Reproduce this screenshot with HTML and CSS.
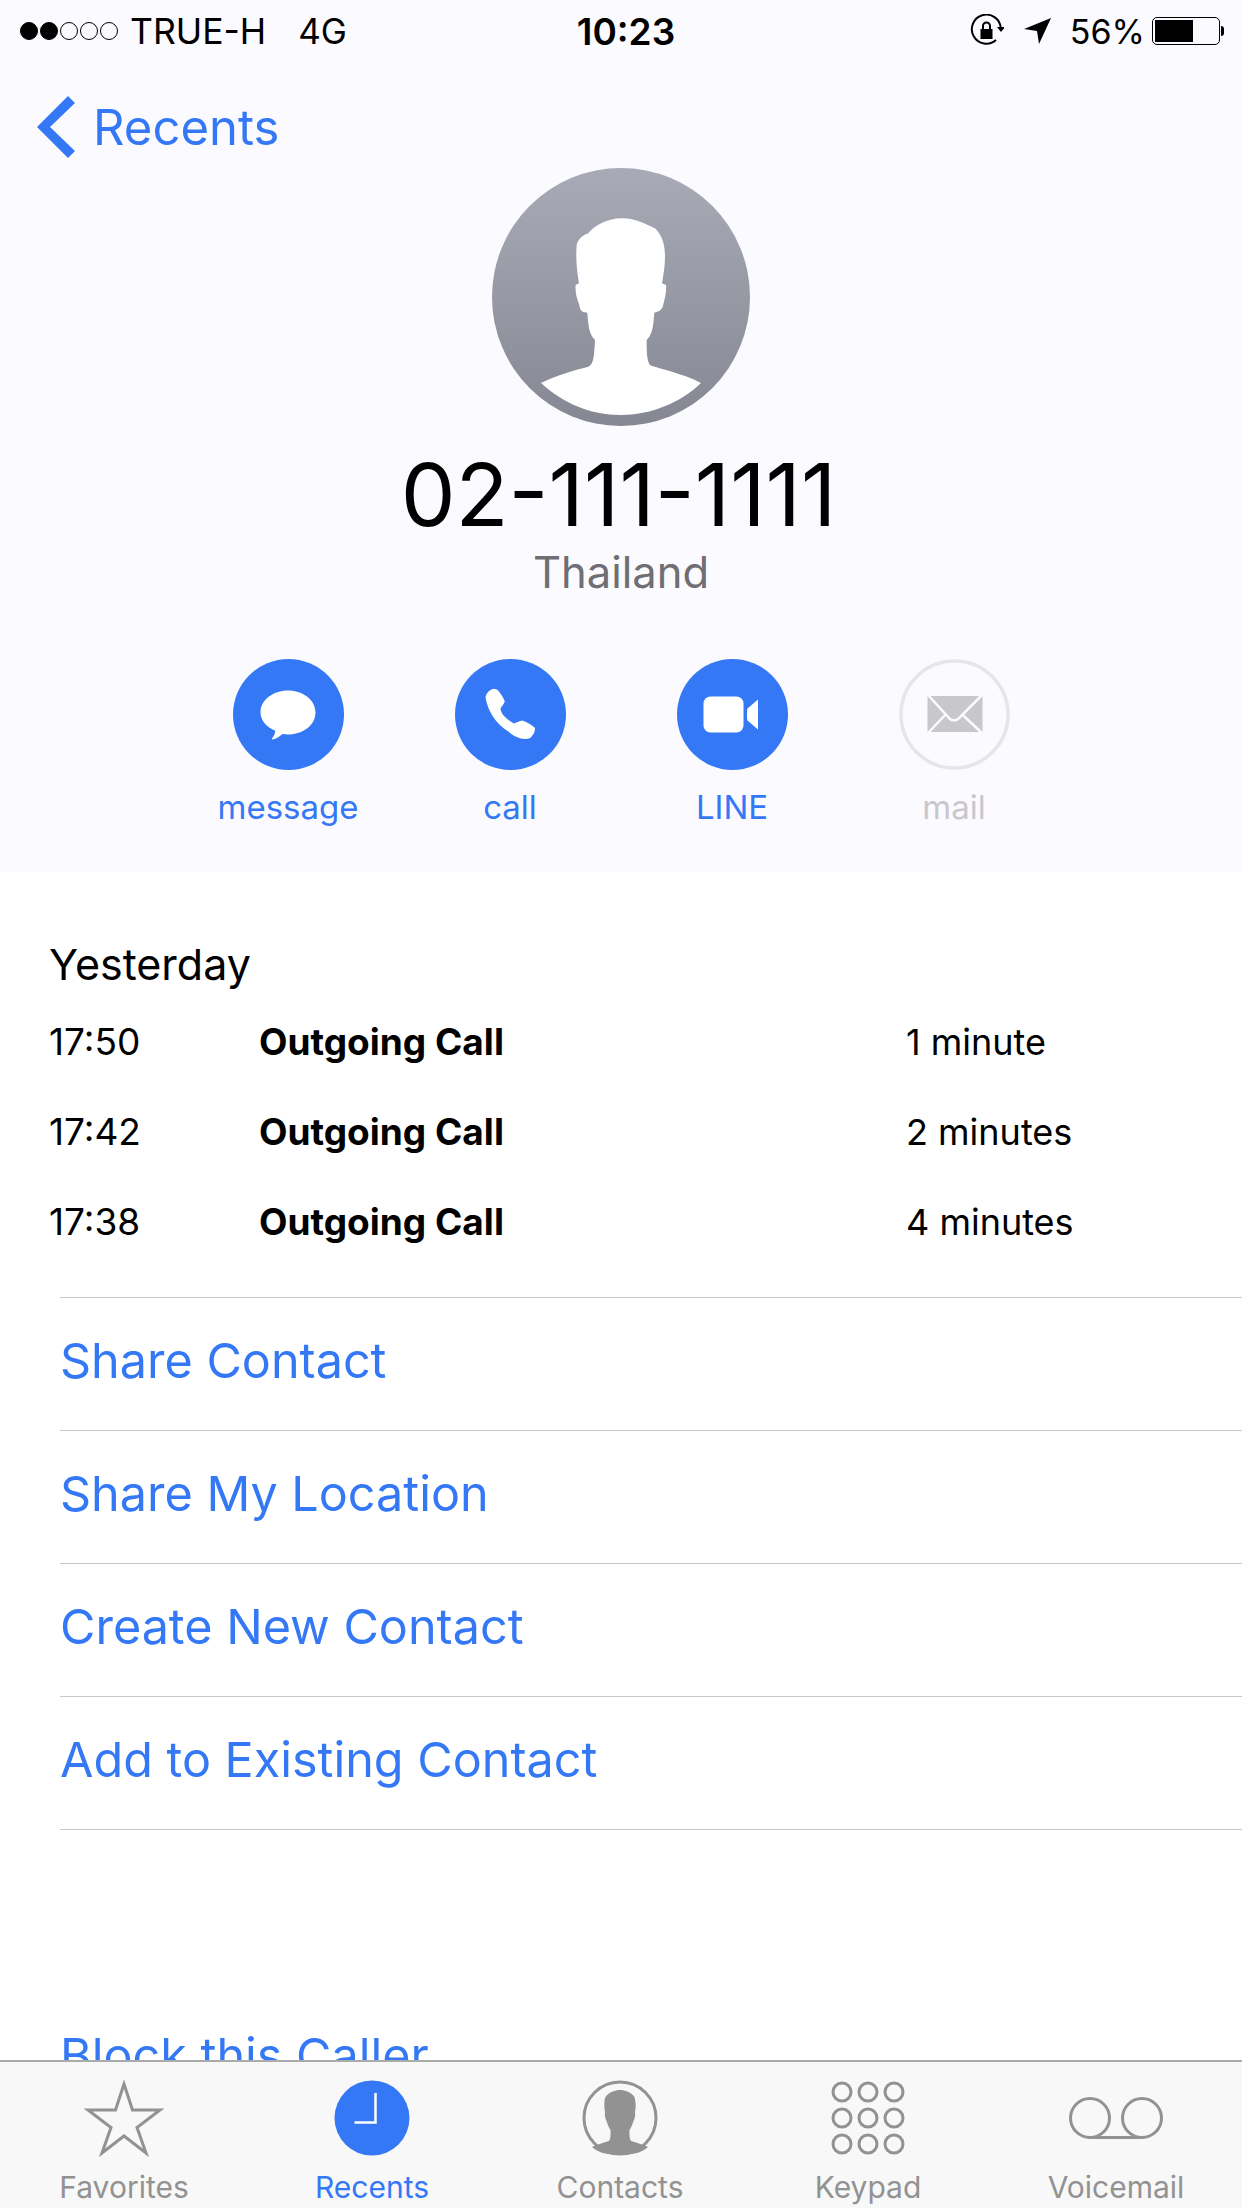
FILE: index.html
```html
<!DOCTYPE html>
<html lang="en">
<head>
<meta charset="utf-8">
<title>Recents</title>
<link rel="stylesheet" href="styles.css">
</head>
<body>
<div class="phone">
  <div class="scroller">
    <header class="head">
      <div class="status">
        <div class="status-left">
          <div class="signal"><i class="dot on"></i><i class="dot on"></i><i class="dot"></i><i class="dot"></i><i class="dot"></i></div>
          <span class="carrier">TRUE-H</span>
          <span class="net">4G</span>
        </div>
        <div class="clock">10:23</div>
        <div class="status-right">
          <svg class="ic-lock" viewBox="0 0 34 34"><path d="M26 26A14.500 14.500 0 1 1 30.800 14" fill="none" stroke="#000" stroke-width="2"/><path d="M27 13h8l-4 5z" fill="#000"/><rect x="10.500" y="15" width="12" height="10" fill="#000"/><path d="M13 15v-3a3.500 3.500 0 0 1 7 0v3" fill="none" stroke="#000" stroke-width="2"/></svg>
          <svg class="ic-loc" viewBox="0 0 28 28"><path d="M27 1 15 27l-2-13L0 12z" fill="#000"/></svg>
          <span class="pct">56%</span>
          <div class="batt"><div class="batt-fill"></div></div>
          <div class="batt-nub"></div>
        </div>
      </div>
      <div class="nav">
        <svg class="chev" viewBox="0 0 38 62"><path d="M31 0 38 7 13 31 38 55 31 62 0 31z" fill="#3478f6"/></svg>
        <span class="back">Recents</span>
      </div>
      <div class="profile">
        <svg class="avatar" viewBox="96 54 774 774">
          <defs><linearGradient id="ag" x1="0" y1="0" x2="0" y2="1"><stop offset="0" stop-color="#a8abb6"/><stop offset="1" stop-color="#858892"/></linearGradient></defs>
          <circle cx="483" cy="441" r="387" fill="url(#ag)"/>
          <path fill="#fff" d="M243 699C290 675 340 662 385 650C400 643 402 625 405 570C385 550 385 520 382 488C370 488 360 485 358 465C350 445 345 425 347 405L357 400C350 360 347 320 350 285C355 265 370 255 385 250C400 230 440 205 485 205C530 205 560 225 585 235C605 255 615 280 615 320C615 350 610 375 606 400L618 405C620 425 615 445 608 470C605 480 595 485 583 488C580 520 580 550 560 570C560 600 560 630 570 645C590 655 670 670 723 699C660 760 570 795 483 795C390 795 310 760 243 699Z"/>
        </svg>
        <h1 class="number">02-111-1111</h1>
        <div class="country">Thailand</div>
      </div>
      <div class="actions">
        <div class="action">
          <svg class="round" viewBox="0 0 111 111"><circle cx="55.500" cy="55.500" r="55.500" fill="#3478f6"/><path fill="#fff" d="M55 31.500C70 31.500 82.500 41 82.500 53.500C82.500 66 70 75.500 55 75.500C53 75.500 51.500 75.300 49.500 75C46.500 77.500 43.500 80 39.500 80.500C39 80.500 38.800 80 39.100 79.600C41 77 42 74.500 42.300 71.800C33.500 68 27.500 61.300 27.500 53.500C27.500 41 40 31.500 55 31.500Z"/></svg>
          <span class="label">message</span>
        </div>
        <div class="action">
          <svg class="round" viewBox="0 0 111 111"><circle cx="55.500" cy="55.500" r="55.500" fill="#3478f6"/><path fill="#fff" d="M38.800 29.800C34 31 30.500 35 30.600 39C32 46 34 51 37 56C41 63 47 68.500 54 73C58 77 65 80 70 80C74 80 76 79 77 77C79 75 80 72 80 69C77 66 72 63 67.400 61.500C64.500 62 62 63 59.200 64.500C56 63 52 60 49.300 57.200C47 55 46 52 45.400 49.800C47 47 49 45 49.800 42.200C48 38 46 35 43.800 32.200C42 30.500 40.500 29.800 38.800 29.800Z"/></svg>
          <span class="label">call</span>
        </div>
        <div class="action">
          <svg class="round" viewBox="0 0 111 111"><circle cx="55.500" cy="55.500" r="55.500" fill="#3478f6"/><rect x="26.500" y="37.500" width="40" height="36" rx="7" fill="#fff"/><path fill="#fff" d="M70.500 49.500 81 40.500 81 70.500 70.500 61.500C69.800 60.500 69.800 50.500 70.500 49.500Z"/></svg>
          <span class="label">LINE</span>
        </div>
        <div class="action">
          <svg class="round" viewBox="0 0 111 111"><circle cx="55.500" cy="55.500" r="53.500" fill="none" stroke="#e5e5ea" stroke-width="3.500"/><rect x="28.500" y="37" width="55" height="36" fill="#c7c7cc"/><path d="M29 36 50 59C52 62 58 62 60 59L83 36M29 74 46.600 55.500M83 74 63.200 55.500" fill="none" stroke="#fbfaff" stroke-width="2.500"/></svg>
          <span class="label muted">mail</span>
        </div>
      </div>
    </header>
    <main class="body">
      <section class="history">
        <h2 class="day">Yesterday</h2>
        <div class="call-row"><span class="t">17:50</span><span class="k">Outgoing Call</span><span class="d">1 minute</span></div>
        <div class="call-row"><span class="t">17:42</span><span class="k">Outgoing Call</span><span class="d">2 minutes</span></div>
        <div class="call-row"><span class="t">17:38</span><span class="k">Outgoing Call</span><span class="d">4 minutes</span></div>
      </section>
      <ul class="links">
        <li class="link">Share Contact</li>
        <li class="link">Share My Location</li>
        <li class="link">Create New Contact</li>
        <li class="link">Add to Existing Contact</li>
      </ul>
      <div class="block">Block this Caller</div>
    </main>
  </div>
  <nav class="tabs">
    <div class="tab">
      <svg class="tab-ic" viewBox="0 0 94 78"><path d="M47 5 55.500 31H83L60 48.500 69 74 47 57 25 74 34 48.500 11 31H38.500Z" fill="none" stroke="#929292" stroke-width="3"/></svg>
      <span class="tab-label">Favorites</span>
    </div>
    <div class="tab on">
      <svg class="tab-ic" viewBox="0 0 94 78"><circle cx="47" cy="39" r="37.500" fill="#3478f6"/><path d="M50.500 14V43.500H29.500" fill="none" stroke="#fff" stroke-width="2.500"/></svg>
      <span class="tab-label">Recents</span>
    </div>
    <div class="tab">
      <svg class="tab-ic" viewBox="0 0 94 78"><circle cx="47" cy="39" r="36" fill="none" stroke="#929292" stroke-width="3"/><path fill="#929292" d="M19 68C25 65 30 64 36 62C38 59 37.500 55 37.500 51C35.500 48 34.500 45 33.500 42C32 39 31.500 36 32 33C31 27 31 21 32.500 18C36 13 42 11 47 11C52 11 58 13 61.500 18C63 24 63 28 62 33C62.500 36 62 39 60.500 42C59.500 45 58.500 48 56.500 51C56.500 55 56 59 58 62C64 64 69 65 75 68C69 74 58 76 47 76C36 76 25 74 19 68Z"/></svg>
      <span class="tab-label">Contacts</span>
    </div>
    <div class="tab">
      <svg class="tab-ic" viewBox="0 0 94 78"><g fill="none" stroke="#929292" stroke-width="3"><circle cx="21" cy="13" r="9"/><circle cx="47" cy="13" r="9"/><circle cx="73" cy="13" r="9"/><circle cx="21" cy="39" r="9"/><circle cx="47" cy="39" r="9"/><circle cx="73" cy="39" r="9"/><circle cx="21" cy="65" r="9"/><circle cx="47" cy="65" r="9"/><circle cx="73" cy="65" r="9"/></g></svg>
      <span class="tab-label">Keypad</span>
    </div>
    <div class="tab">
      <svg class="tab-ic" viewBox="0 0 94 78"><g fill="none" stroke="#929292" stroke-width="3"><circle cx="21" cy="39" r="19.500"/><circle cx="73" cy="39" r="19.500"/><path d="M21 58.500H73"/></g></svg>
      <span class="tab-label">Voicemail</span>
    </div>
  </nav>
</div>
</body>
</html>
```
FILE: styles.css
```css
* { box-sizing: border-box; }
html, body { margin: 0; padding: 0; background: #fff; }
body { font-family: Inter, "Liberation Sans", sans-serif; color: #000; }
.phone { width: 1242px; height: 2208px; display: flex; flex-direction: column; overflow: hidden; }
.scroller { flex: 1 1 0; min-height: 0; overflow: hidden; }

.head { height: 872px; background: #fbfaff; }
.status { height: 62px; padding: 0 18px 0 20px; display: grid; grid-template-columns: 1fr auto 1fr; align-items: center; }
.status-left { display: flex; align-items: center; }
.signal { display: flex; gap: 2px; width: 110px; }
.dot { width: 18px; height: 18px; border-radius: 50%; border: 1.500px solid #000; display: block; }
.dot.on { background: #000; }
.carrier { font-size: 35.500px; }
.net { font-size: 35px; margin-left: 32px; }
.clock { font-size: 37px; font-weight: 600; padding-left: 8px; }
.status-right { display: flex; align-items: center; justify-content: flex-end; }
.ic-lock { width: 34px; height: 34px; }
.ic-loc { width: 28px; height: 28px; margin-left: 20px; }
.pct { font-size: 34px; margin-left: 18px; }
.batt { width: 68px; height: 28px; margin-left: 7px; border: 1.500px solid #000; border-radius: 5px; padding: 2px; }
.batt-fill { width: 38px; height: 100%; background: #000; }
.batt-nub { width: 3px; height: 10px; background: #000; border-radius: 0 3px 3px 0; margin-left: 1px; }

.nav { display: flex; align-items: center; height: 72px; margin-top: 29px; padding-left: 37px; }
.chev { width: 38px; height: 62px; }
.back { font-size: 49px; color: #3478f6; margin-left: 18px; }

.profile { display: flex; flex-direction: column; align-items: center; margin-top: 5px; }
.avatar { width: 258px; height: 258px; display: block; }
.number { margin: 19px 0 0; padding-right: 5px; font-size: 87px; line-height: 100px; font-weight: 400; }
.country { font-size: 43.500px; line-height: 56px; margin-top: -1px; color: #6e6e73; }

.actions { display: grid; grid-template-columns: repeat(4, 222px); justify-content: center; margin-top: 59px; }
.action { display: flex; flex-direction: column; align-items: center; }
.round { width: 111px; height: 111px; display: block; }
.label { font-size: 33px; line-height: 44px; margin-top: 15px; color: #3478f6; }
.label.muted { color: #c7c7cc; }

.body { background: #fff; }
.history { padding: 67px 0 0 49px; }
.day { margin: 0 0 29px; font-size: 43px; line-height: 50px; font-weight: 400; }
.call-row { display: grid; grid-template-columns: 210px 647px auto; height: 90px; font-size: 36px; line-height: 48px; }
.t { font-size: 37px; }
.k { font-weight: 700; font-size: 37px; }
.links { list-style: none; margin: 9px 0 0 60px; padding: 0; }
.link { height: 133px; border-top: 1.500px solid #c8c7cc; font-size: 48.500px; line-height: 125px; color: #3478f6; }
.link:last-child { height: 134px; border-bottom: 1.500px solid #c8c7cc; }
.block { margin: 196px 0 0 60px; font-size: 48.500px; line-height: 60px; color: #3478f6; }

.tabs { height: 148px; flex: none; background: #f8f8f8; border-top: 2px solid #ababab; padding-right: 2px; display: grid; grid-template-columns: repeat(5, 1fr); }
.tab { display: flex; flex-direction: column; align-items: center; padding-top: 17px; }
.tab-ic { width: 94px; height: 78px; display: block; }
.tab-label { font-size: 30px; line-height: 36px; margin-top: 12px; color: #929292; }
.tab.on .tab-label { color: #3478f6; }
```
